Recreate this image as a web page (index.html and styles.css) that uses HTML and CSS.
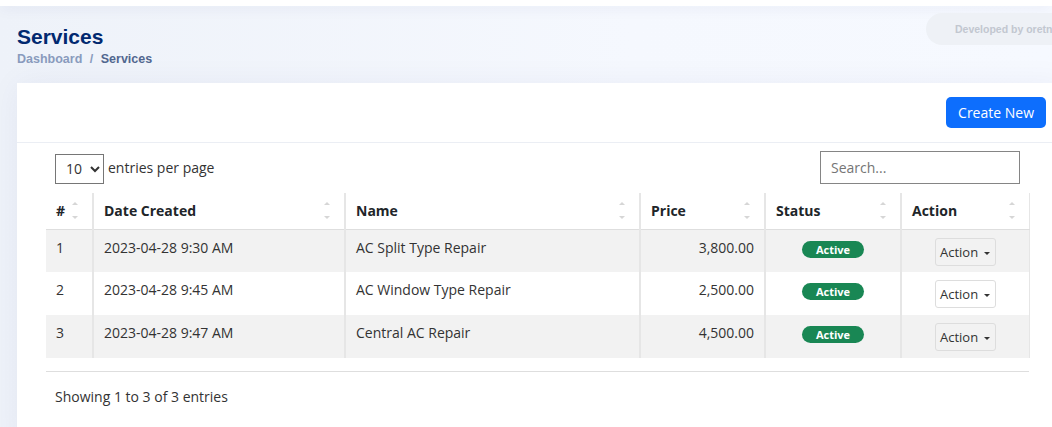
FILE: index.html
```html
<!DOCTYPE html>
<html lang="en">
<head>
    <meta charset="UTF-8">
    <title>Services</title>
    <link rel="stylesheet" href="styles.css">
</head>
<body>
    <div class="topbar"></div>
    <main class="main">
        <div class="pagetitle">
            <div>
                <h1>Services</h1>
                <nav class="breadcrumb">
                    <span class="crumb-link">Dashboard</span>
                    <span class="crumb-sep">/</span>
                    <span class="crumb-active">Services</span>
                </nav>
            </div>
            <div class="credit">Developed by oretnom23</div>
        </div>

        <section class="card">
            <div class="card-header">
                <button class="btn-primary" type="button">Create New</button>
            </div>
            <div class="card-body">
                <div class="dt-top">
                    <div class="dt-length">
                        <select class="dt-select">
                            <option>10</option>
                        </select>
                        <span>entries per page</span>
                    </div>
                    <input class="dt-search" type="text" placeholder="Search...">
                </div>

                <table class="dt-table">
                    <thead>
                        <tr>
                            <th class="col-num"><div class="th-inner"><span>#</span><span class="sorter"></span></div></th>
                            <th class="col-date"><div class="th-inner"><span>Date Created</span><span class="sorter"></span></div></th>
                            <th class="col-name"><div class="th-inner"><span>Name</span><span class="sorter"></span></div></th>
                            <th class="col-price"><div class="th-inner"><span>Price</span><span class="sorter"></span></div></th>
                            <th class="col-status"><div class="th-inner"><span>Status</span><span class="sorter"></span></div></th>
                            <th class="col-action"><div class="th-inner"><span>Action</span><span class="sorter"></span></div></th>
                        </tr>
                    </thead>
                    <tbody>
                        <tr>
                            <td>1</td>
                            <td>2023-04-28 9:30 AM</td>
                            <td>AC Split Type Repair</td>
                            <td class="text-end">3,800.00</td>
                            <td class="text-center"><span class="badge">Active</span></td>
                            <td class="text-center"><button class="btn-action" type="button">Action <span class="caret"></span></button></td>
                        </tr>
                        <tr>
                            <td>2</td>
                            <td>2023-04-28 9:45 AM</td>
                            <td>AC Window Type Repair</td>
                            <td class="text-end">2,500.00</td>
                            <td class="text-center"><span class="badge">Active</span></td>
                            <td class="text-center"><button class="btn-action" type="button">Action <span class="caret"></span></button></td>
                        </tr>
                        <tr>
                            <td>3</td>
                            <td>2023-04-28 9:47 AM</td>
                            <td>Central AC Repair</td>
                            <td class="text-end">4,500.00</td>
                            <td class="text-center"><span class="badge">Active</span></td>
                            <td class="text-center"><button class="btn-action" type="button">Action <span class="caret"></span></button></td>
                        </tr>
                    </tbody>
                </table>

                <div class="dt-bottom">Showing 1 to 3 of 3 entries</div>
            </div>
        </section>
    </main>
</body>
</html>
```

FILE: styles.css
```css
body {
    margin: 0;
    padding: 0;
    font-family: "Open Sans", sans-serif;
    font-size: 14px;
    color: #212529;
    background: linear-gradient(90deg, #eef2f9 0%, #f5f8fe 60%, #f6f9ff 100%);
    overflow: hidden;
    height: 427px;
}

.topbar {
    height: 6px;
    background-color: #ffffff;
    box-shadow: 0 2px 14px rgba(1, 41, 112, 0.08);
}

.main {
    width: 1100px;
    padding-left: 17px;
}

/* Page title and breadcrumb */
.pagetitle {
    width: 1049px;
    display: flex;
    justify-content: space-between;
    align-items: flex-start;
    padding-top: 19px;
    margin-bottom: 16px;
}

.pagetitle h1 {
    margin: 0 0 2px;
    font-family: "Liberation Sans", Arial, sans-serif;
    font-size: 21px;
    line-height: 24px;
    font-weight: bold;
    color: #012970;
}

.breadcrumb {
    font-family: "Liberation Sans", Arial, sans-serif;
    font-size: 12.5px;
    line-height: 16px;
    font-weight: bold;
}

.crumb-link {
    color: #899bbd;
}

.crumb-sep {
    color: #899bbd;
    margin: 0 4px;
}

.crumb-active {
    color: #51678f;
}

.credit {
    box-sizing: border-box;
    width: 200px;
    margin-top: -12px;
    margin-right: -60px;
    padding: 0 29px;
    height: 32px;
    line-height: 32px;
    border-radius: 16px;
    background-color: #eef1f6;
    color: #c2c7d0;
    font-family: "Liberation Sans", Arial, sans-serif;
    font-size: 10.5px;
    font-weight: bold;
    white-space: nowrap;
    overflow: hidden;
}

/* Card */
.card {
    width: 1049px;
    background-color: #ffffff;
    box-shadow: 0 0 30px rgba(1, 41, 112, 0.05);
}

.card-header {
    height: 60px;
    box-sizing: border-box;
    padding: 14px 20px 0 0;
    border-bottom: 1px solid #ebeef4;
    display: flex;
    justify-content: flex-end;
    align-items: flex-start;
}

.btn-primary {
    height: 31px;
    padding: 0 12px;
    background-color: #0d6efd;
    color: #ffffff;
    border: none;
    border-radius: 5px;
    font-family: "Open Sans", sans-serif;
    font-size: 14px;
    cursor: pointer;
}

.card-body {
    padding: 8px 0 0 29px;
    height: 300px;
}

/* Datatable top bar */
.dt-top {
    width: 983px;
    box-sizing: border-box;
    padding: 0 9px;
    height: 33px;
    display: flex;
    justify-content: space-between;
    align-items: center;
    margin-bottom: 9px;
}

.dt-length {
    display: flex;
    align-items: center;
    gap: 4px;
    color: #333333;
}

.dt-select {
    width: 49px;
    height: 30px;
    border: 1px solid #767676;
    border-radius: 0;
    background-color: #ffffff;
    font-family: "Open Sans", sans-serif;
    font-size: 14px;
    color: #333333;
    padding-left: 6px;
    margin-top: 2px;
}

.dt-search {
    width: 200px;
    height: 33px;
    box-sizing: border-box;
    border: 1px solid #858585;
    padding: 0 10px;
    font-family: "Open Sans", sans-serif;
    font-size: 14px;
}

.dt-search::placeholder {
    color: #757575;
}

/* Table */
.dt-table {
    width: 983px;
    border-collapse: collapse;
    table-layout: fixed;
}

.col-num { width: 47px; }
.col-date { width: 252px; }
.col-name { width: 295px; }
.col-price { width: 125px; }
.col-status { width: 136px; }
.col-action { width: 128px; }

.dt-table th {
    box-sizing: border-box;
    height: 36px;
    padding: 0 10px;
    text-align: left;
    font-weight: bold;
    color: #212529;
    border-bottom: 1px solid #dedede;
    border-left: 2px solid #e6e6e6;
}

.dt-table th:first-child,
.dt-table td:first-child {
    border-left: none;
}

.dt-table th:last-child,
.dt-table td:last-child {
    border-right: 1px solid #e6e6e6;
}

.th-inner {
    display: flex;
    justify-content: space-between;
    align-items: center;
}

.sorter {
    display: flex;
    flex-direction: column;
    gap: 11px;
    margin-right: 4px;
}

.sorter::before,
.sorter::after {
    content: "";
    width: 0;
    height: 0;
    border-left: 3px solid transparent;
    border-right: 3px solid transparent;
}

.sorter::before {
    border-bottom: 3px solid #d6d6d6;
}

.sorter::after {
    border-top: 3px solid #d6d6d6;
}

.dt-table td {
    height: 43px;
    box-sizing: border-box;
    padding: 8px 10px 0 10px;
    vertical-align: top;
    line-height: 20px;
    color: #333333;
    border-left: 2px solid #e6e6e6;
}

.dt-table tbody tr:nth-child(odd) {
    background-color: #f2f2f2;
}

.text-end {
    text-align: right;
}

.text-center {
    text-align: center;
}

.badge {
    display: inline-block;
    margin-top: 3px;
    padding: 0 14px;
    height: 17px;
    line-height: 17px;
    border-radius: 9px;
    background-color: #198754;
    color: #ffffff;
    font-size: 11px;
    font-weight: bold;
    vertical-align: top;
}

.btn-action {
    height: 28px;
    padding: 0 5px 0 4px;
    background-color: transparent;
    border: 1px solid #dddddd;
    border-radius: 3px;
    font-family: "Open Sans", sans-serif;
    font-size: 13px;
    color: #333333;
    vertical-align: top;
}

.caret {
    display: inline-block;
    width: 0;
    height: 0;
    margin-left: 2px;
    vertical-align: middle;
    border-left: 3px solid transparent;
    border-right: 3px solid transparent;
    border-top: 3px solid #333333;
}

.dt-bottom {
    width: 983px;
    box-sizing: border-box;
    margin-top: 13px;
    border-top: 1px solid #dedede;
    padding: 15px 9px 0;
    line-height: 20px;
    color: #333333;
}
```
